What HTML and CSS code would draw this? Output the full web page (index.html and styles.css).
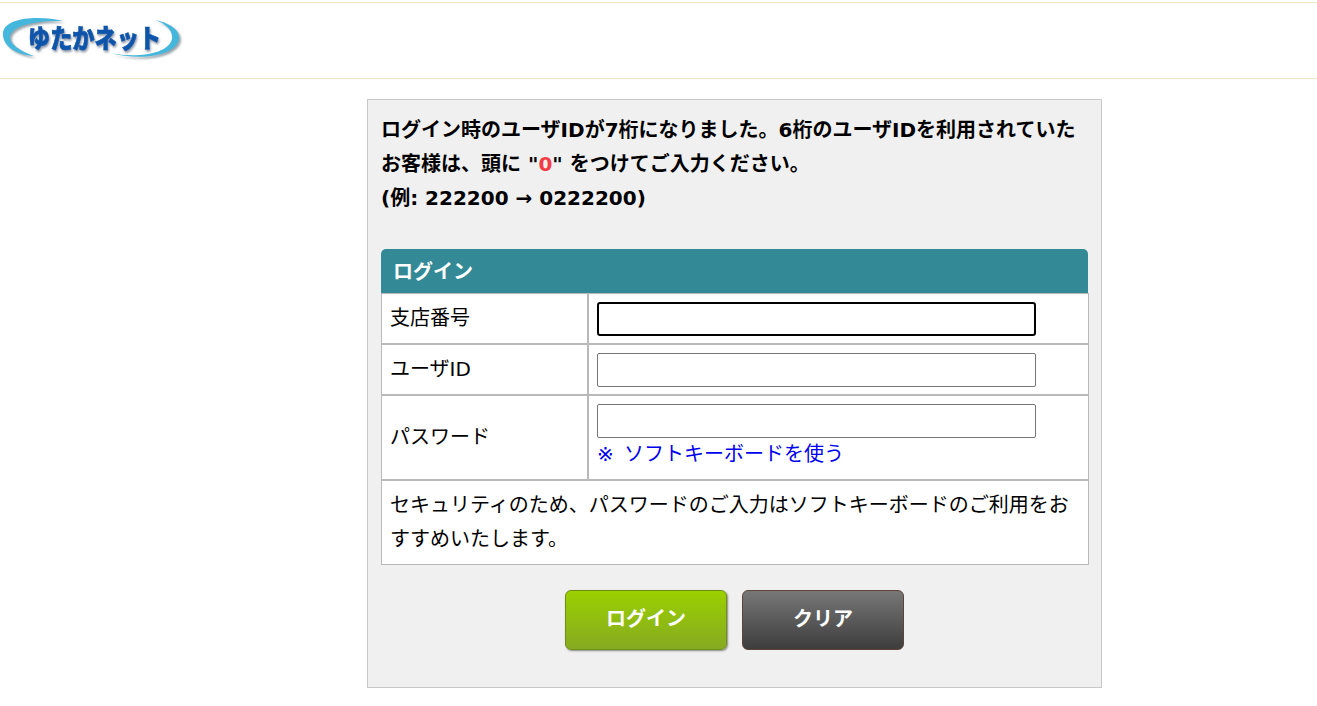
FILE: index.html
```html
<!DOCTYPE html>
<html lang="ja">
<head>
<meta charset="utf-8">
<title>ゆたかネット ログイン</title>
<link rel="stylesheet" href="styles.css">
</head>
<body>
<header class="site-header">
  <svg class="logo" width="200" height="50" viewBox="0 0 200 50" role="img" aria-label="ゆたかネット">
    <defs>
      <filter id="blur" x="-10%" y="-30%" width="120%" height="160%"><feGaussianBlur stdDeviation="1.3"/></filter>
      <filter id="soft" x="-5%" y="-20%" width="110%" height="140%"><feGaussianBlur stdDeviation="0.35"/></filter>
    </defs>
    <path class="swoosh-shadow" filter="url(#blur)" d="M65 9C42 3 6 5 5 21C4 35 20 43 36 44C22 39 11 32 12 24C14 14 37 8 65 9Z"/>
    <path class="swoosh-shadow" filter="url(#blur)" d="M157 8C172 11 182 18 181 27C179 42 147 50 112 41C137 46 170 43 174 27C175 19 169 12 157 8Z"/>
    <path class="swoosh" filter="url(#soft)" d="M63 7C40 1 4 3 3 19C2 33 18 41 34 42C20 37 9 30 10 22C12 12 35 6 63 7Z"/>
    <path class="swoosh" filter="url(#soft)" d="M155 6C170 9 180 16 179 25C177 40 145 48 110 39C135 44 168 41 172 25C173 17 167 10 155 6Z"/>
    <text class="logo-text shadow" filter="url(#blur)" x="29" y="36" textLength="133" lengthAdjust="spacingAndGlyphs">ゆたかネット</text>
    <text class="logo-text" filter="url(#soft)" x="28" y="34" textLength="133" lengthAdjust="spacingAndGlyphs">ゆたかネット</text>
  </svg>
</header>
<main class="panel">
  <p class="notice">ログイン時のユーザIDが7桁になりました。6桁のユーザIDを利用されていたお客様は、頭に "<span class="zero">0</span>" をつけてご入力ください。<br>(例: 222200 → 0222200)</p>
  <form class="login">
    <h1 class="login-title">ログイン</h1>
    <table class="login-table">
      <tr>
        <th class="label">支店番号</th>
        <td class="input-cell"><input class="field focused" type="text"></td>
      </tr>
      <tr>
        <th class="label">ユーザID</th>
        <td class="input-cell"><input class="field" type="text"></td>
      </tr>
      <tr>
        <th class="label">パスワード</th>
        <td class="pw-cell"><input class="field" type="password"><a class="soft-key" href="#">※ ソフトキーボードを使う</a></td>
      </tr>
      <tr>
        <td class="note" colspan="2">セキュリティのため、パスワードのご入力はソフトキーボードのご利用をおすすめいたします。</td>
      </tr>
    </table>
    <div class="actions">
      <button class="btn btn-login" type="button">ログイン</button>
      <button class="btn btn-clear" type="button">クリア</button>
    </div>
  </form>
</main>
</body>
</html>
```
FILE: styles.css
```css
* { box-sizing: border-box; }
html, body { margin: 0; padding: 0; }
body {
  background: #fff;
  color: #000;
  font-family: "DejaVu Sans", "Noto Sans CJK JP", sans-serif;
  font-size: 20px;
  height: 706px;
  overflow: hidden;
  padding-top: 2px;
}
.site-header {
  height: 77px;
  border-top: 1px solid #f3e4c8;
  border-bottom: 1px solid #f3e4c8;
  padding-top: 11px;
}
.logo { display: block; }
.swoosh { fill: #45b6dc; }
.swoosh-shadow { fill: #9aa4ac; }
.logo-text {
  fill: #1155aa;
  stroke: #1155aa;
  stroke-width: 0.6px;
  font-family: "Noto Sans CJK JP", sans-serif;
  font-weight: 900;
  font-size: 26px;
}
.logo-text.shadow { fill: #8e98a8; stroke: #8e98a8; }
.panel {
  width: 735px;
  height: 589px;
  margin: 20px 0 0 367px;
  padding: 13px 13px 0;
  background: #f0f0f0;
  border: 1px solid #c8c8c8;
}
.notice {
  margin: 0;
  height: 136px;
  font-size: 20px;
  font-weight: 700;
  line-height: 34px;
}
.zero { color: #f33a45; }
.login-title {
  margin: 0;
  height: 44px;
  padding: 0 12px;
  background: #338a96;
  color: #fff;
  font-size: 20px;
  font-weight: 700;
  line-height: 46px;
  border-radius: 5px 5px 0 0;
}
.login-table {
  width: 708px;
  table-layout: fixed;
  border-collapse: separate;
  border-spacing: 0;
  background: #fff;
}
.login-table th, .login-table td {
  border: 1px solid #b9b9b9;
  padding: 0 8px;
  font-size: 20px;
  font-weight: 400;
  line-height: 34px;
  text-align: left;
  vertical-align: middle;
}
.login-table .label { width: 207px; padding-bottom: 2px; }
.login-table .input-cell { padding-top: 8px; padding-bottom: 7px; }
.field {
  display: block;
  width: 439px;
  height: 34px;
  padding: 0 4px;
  background: #fff;
  border: 1px solid #767676;
  border-radius: 2px;
  font-size: 20px;
}
.field.focused {
  border: 2px solid #000;
  border-radius: 3px;
}
.login-table .pw-cell { padding-top: 8px; padding-bottom: 9px; }
.soft-key {
  display: block;
  line-height: 32px;
  height: 32px;
  color: #0000ee;
  text-decoration: none;
  word-spacing: 4px;
}
.login-table .note {
  padding-top: 7px;
  padding-bottom: 8px;
}
.actions {
  display: flex;
  gap: 15px;
  margin-top: 25px;
  padding-left: 184px;
}
.btn {
  width: 162px;
  height: 60px;
  padding: 0 0 6px;
  color: #fff;
  font-family: inherit;
  font-size: 20px;
  font-weight: 700;
  border-radius: 6px;
  cursor: pointer;
}
.btn-login {
  background: linear-gradient(#9bd000, #86aa22);
  border: 1px solid #6f8f12;
  box-shadow: 1px 1px 2px #888;
}
.btn-clear {
  background: linear-gradient(#777, #3d3d3d);
  border: 1px solid #5d4438;
}
```
